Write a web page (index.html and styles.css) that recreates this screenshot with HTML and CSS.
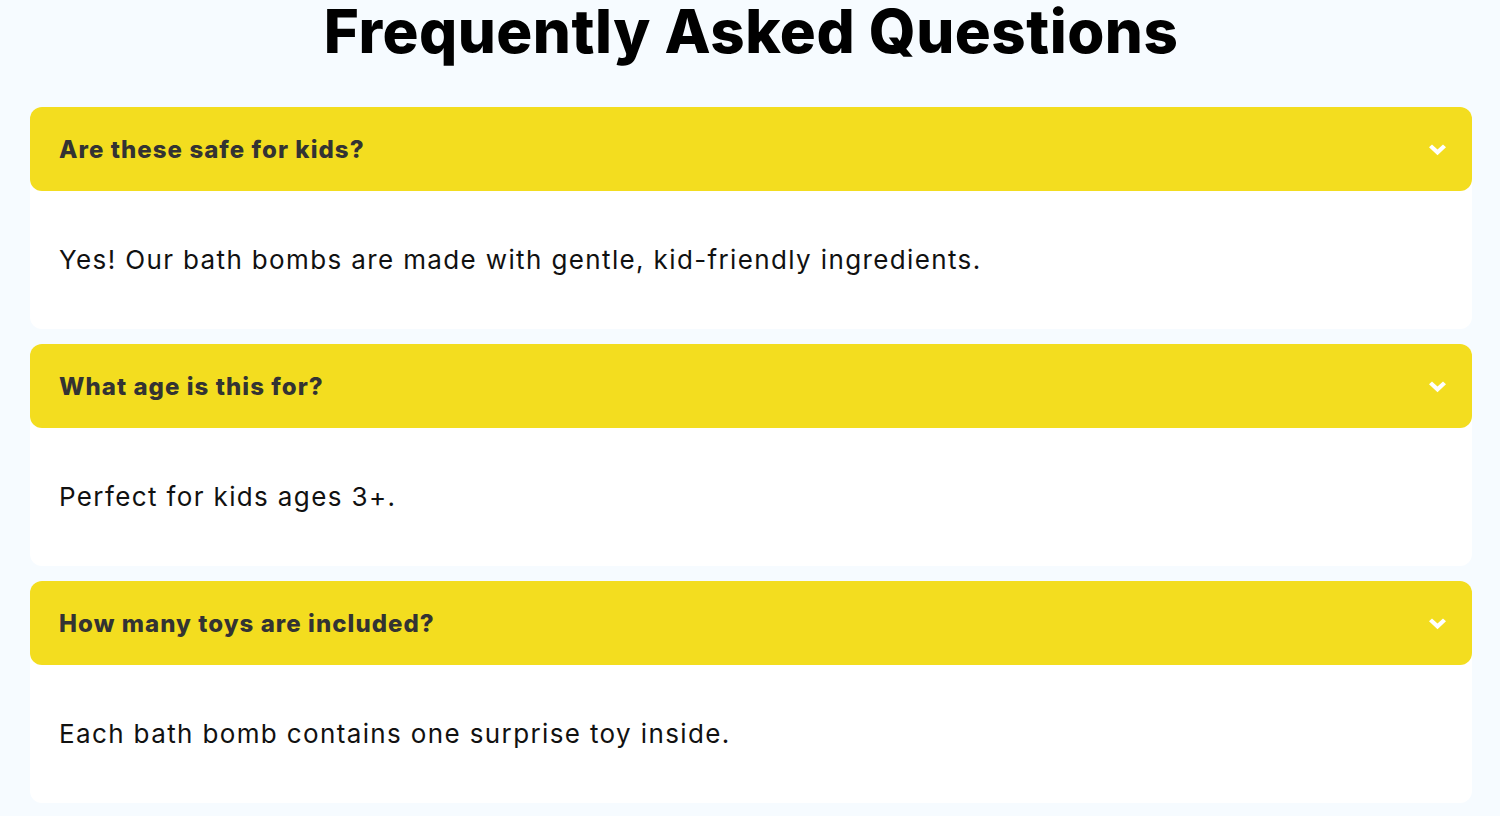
FILE: index.html
```html
<!DOCTYPE html>
<html lang="en">
<head>
<meta charset="utf-8">
<title>FAQ</title>
<link rel="stylesheet" href="styles.css">
</head>
<body>
<section class="faq">
  <h1 class="faq-title">Frequently Asked Questions</h1>
  <div class="faq-list">
    <div class="faq-item">
      <div class="faq-question">
        <span class="q-text">Are these safe for kids?</span>
        <svg class="chev" width="17" height="12" viewBox="0 0 17 12"><path d="M0 3.2 L3 0.4 L8.5 5.6 L14 0.4 L17 3.2 L8.5 11.2 Z" fill="#fff"/></svg>
      </div>
      <div class="faq-answer"><p class="a-text">Yes! Our bath bombs are made with gentle, kid-friendly ingredients.</p></div>
    </div>
    <div class="faq-item">
      <div class="faq-question">
        <span class="q-text">What age is this for?</span>
        <svg class="chev" width="17" height="12" viewBox="0 0 17 12"><path d="M0 3.2 L3 0.4 L8.5 5.6 L14 0.4 L17 3.2 L8.5 11.2 Z" fill="#fff"/></svg>
      </div>
      <div class="faq-answer"><p class="a-text">Perfect for kids ages 3+.</p></div>
    </div>
    <div class="faq-item">
      <div class="faq-question">
        <span class="q-text">How many toys are included?</span>
        <svg class="chev" width="17" height="12" viewBox="0 0 17 12"><path d="M0 3.2 L3 0.4 L8.5 5.6 L14 0.4 L17 3.2 L8.5 11.2 Z" fill="#fff"/></svg>
      </div>
      <div class="faq-answer"><p class="a-text">Each bath bomb contains one surprise toy inside.</p></div>
    </div>
  </div>
</section>
</body>
</html>
```

FILE: styles.css
```css
html, body {
  margin: 0;
  padding: 0;
  background: #f6fbff;
}
body {
  font-family: "Inter", "Noto Sans", sans-serif;
  color: #000;
}
.faq {
  padding: 0 28px 0 30px;
}
.faq-title {
  margin: 0;
  padding-top: 1px;
  height: 106px;
  line-height: 60px;
  font-size: 60px;
  font-weight: 800;
  letter-spacing: 0.5px;
  text-align: center;
  color: #000;
}
.faq-list {
  display: flex;
  flex-direction: column;
  gap: 15.5px;
}
.faq-item {
  border-radius: 12px;
  background: #fff;
}
.faq-question {
  height: 84px;
  background: #f3dd1f;
  border-radius: 12px;
  display: flex;
  align-items: center;
  justify-content: space-between;
  padding: 0 26px 0 29px;
}
.q-text {
  font-size: 24px;
  font-weight: 800;
  color: #333;
  letter-spacing: 1.05px;
}
.chev {
  display: block;
  margin-top: 1px;
}
.faq-answer {
  height: 137.5px;
  display: flex;
  align-items: center;
  padding: 0 29px;
}
.a-text {
  margin: 0;
  font-size: 26px;
  font-weight: 400;
  color: #111;
  letter-spacing: 1.37px;
}
```
